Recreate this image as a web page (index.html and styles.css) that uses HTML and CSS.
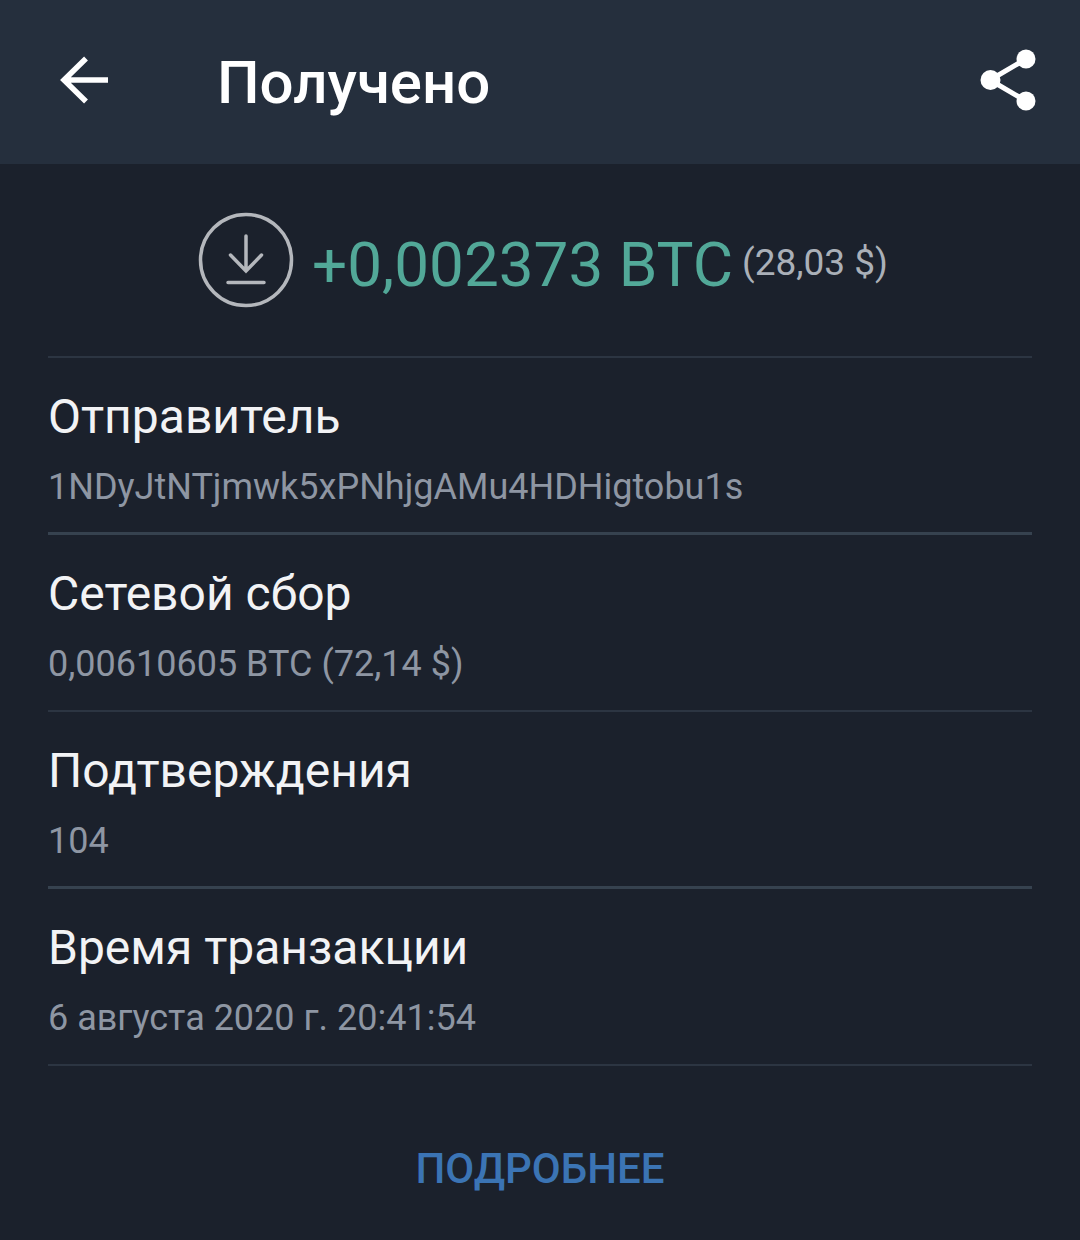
FILE: index.html
```html
<!DOCTYPE html>
<html lang="ru">
<head>
    <meta charset="UTF-8">
    <meta name="viewport" content="width=device-width, initial-scale=1.0">
    <title>Получено</title>
    <link rel="stylesheet" href="styles.css">
</head>
<body>
    <header class="topbar">
        <svg class="icon-back" width="52" height="52" viewBox="0 0 52 52" fill="none" stroke="#fff" stroke-width="5.5">
            <path d="M49 26H6M27 4.500L5 26l22 21.500"/>
        </svg>
        <h1>Получено</h1>
        <svg class="icon-share" width="58" height="62" viewBox="0 0 58 62" fill="#fff" stroke="none">
            <path d="M47 10L11 31l36 21" fill="none" stroke="#fff" stroke-width="5"/>
            <circle cx="47" cy="10" r="9.500"/>
            <circle cx="11.500" cy="31" r="10"/>
            <circle cx="47" cy="52" r="9.500"/>
        </svg>
    </header>

    <main class="content">
        <div class="amount">
            <svg class="icon-received" width="96" height="96" viewBox="0 0 96 96" fill="none" stroke="#b4b7bc" stroke-width="3.500">
                <circle cx="48" cy="48" r="45.500"/>
                <path d="M48 24V59M32.500 43L48 59l15.500-16M30 70.500H66" stroke-linecap="round"/>
            </svg>
            <span class="amount-value">+0,002373 BTC</span>
            <span class="amount-fiat">(28,03 $)</span>
        </div>

        <div class="row row-thick">
            <div class="row-label">Отправитель</div>
            <div class="row-value">1NDyJtNTjmwk5xPNhjgAMu4HDHigtobu1s</div>
        </div>
        <div class="row">
            <div class="row-label">Сетевой сбор</div>
            <div class="row-value">0,00610605 BTC (72,14 $)</div>
        </div>
        <div class="row row-thick">
            <div class="row-label">Подтверждения</div>
            <div class="row-value">104</div>
        </div>
        <div class="row">
            <div class="row-label">Время транзакции</div>
            <div class="row-value">6 августа 2020 г. 20:41:54</div>
        </div>

        <div class="more">ПОДРОБНЕЕ</div>
    </main>
</body>
</html>
```

FILE: styles.css
```css
body {
    margin: 0;
    height: 1240px;
    overflow: hidden;
    background-color: #1b212c;
    font-family: Roboto, "Noto Sans", sans-serif;
}
.topbar {
    display: flex;
    align-items: center;
    height: 164px;
    padding: 0 43px 0 59px;
    box-sizing: border-box;
    background-color: #252f3d;
}
.icon-back, .icon-share {
    margin-bottom: 4px;
}
.topbar h1 {
    flex: 1;
    margin: 0 0 0 106px;
    font-size: 60px;
    font-weight: 500;
    color: #fff;
}
.content {
    padding: 0 48px;
}
.amount {
    display: flex;
    align-items: center;
    height: 194px;
    padding-left: 150px;
    border-bottom: 2px solid #2c3542;
    box-sizing: border-box;
}
.amount-value {
    margin-left: 18px;
    margin-top: 8px;
    font-size: 62px;
    color: #52a898;
}
.amount-fiat {
    margin-left: 9px;
    margin-top: 4px;
    font-size: 37px;
    color: #aab0b8;
}
.row {
    height: 177px;
    box-sizing: border-box;
    padding-top: 29px;
    border-bottom: 2px solid #2c3542;
}
.row-thick {
    border-bottom: 3px solid #36424f;
}
.row-label {
    font-size: 48px;
    line-height: 60px;
    color: #f2f3f5;
}
.row-value {
    margin-top: 18px;
    font-size: 36px;
    line-height: 44px;
    color: #8e96a3;
}
.more {
    margin-top: 78px;
    text-align: center;
    font-size: 42px;
    font-weight: 500;
    color: #3b74b4;
}
```
